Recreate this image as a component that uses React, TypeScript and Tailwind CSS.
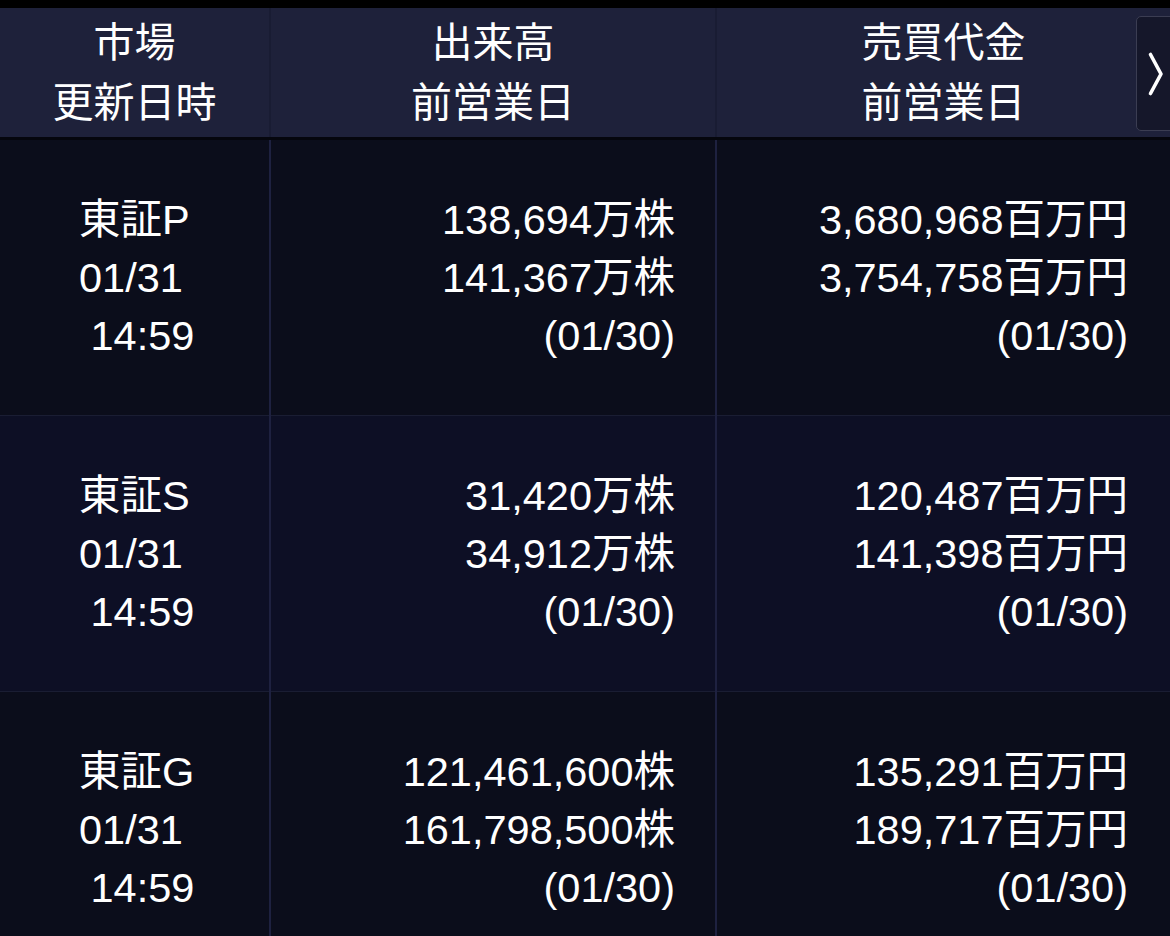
import { Fragment } from "react";

type Row = {
  market: string;
  date: string;
  time: string;
  volume: [string, string];
  value: [string, string];
  prev: string;
};

const rows: Row[] = [
  {
    market: "東証P",
    date: "01/31",
    time: " 14:59",
    volume: ["138,694万株", "141,367万株"],
    value: ["3,680,968百万円", "3,754,758百万円"],
    prev: "(01/30)"
  },
  {
    market: "東証S",
    date: "01/31",
    time: " 14:59",
    volume: ["31,420万株", "34,912万株"],
    value: ["120,487百万円", "141,398百万円"],
    prev: "(01/30)"
  },
  {
    market: "東証G",
    date: "01/31",
    time: " 14:59",
    volume: ["121,461,600株", "161,798,500株"],
    value: ["135,291百万円", "189,717百万円"],
    prev: "(01/30)"
  }
];

const font = { fontFamily: '"Liberation Sans", "Noto Sans CJK JP", sans-serif' };

export default function App() {
  return (
    <div
      className="flex h-[936px] w-[1170px] flex-col overflow-hidden bg-[#0b0d1b] text-[41.5px] leading-[58px] text-white"
      style={font}
    >
      <div className="h-2 shrink-0 bg-black" />

      <header className="grid h-[129px] shrink-0 grid-cols-[269px_2px_444px_2px_1fr] bg-[#1e213a] text-[41px] leading-[60px]">
        <div className="flex flex-col items-center justify-center">
          <span>市場</span>
          <span>更新日時</span>
        </div>
        <div className="bg-[#191c33]" />
        <div className="flex flex-col items-center justify-center">
          <span>出来高</span>
          <span>前営業日</span>
        </div>
        <div className="bg-[#191c33]" />
        <div className="relative flex flex-col items-center justify-center">
          <span>売買代金</span>
          <span>前営業日</span>
          <button
            type="button"
            className="absolute right-[-6px] top-2 flex h-[115px] w-10 items-center rounded-[5px] border border-[#3b3d52] bg-[#15172a] pl-[10px]"
            aria-label="next"
          >
            <svg width="18" height="46" viewBox="0 0 18 46" fill="none">
              <path
                d="M3.5 3.5 L14 23 L3.5 42.5"
                stroke="white"
                strokeWidth="3.6"
                strokeLinecap="round"
                strokeLinejoin="round"
              />
            </svg>
          </button>
        </div>
      </header>

      <div className="h-[3px] shrink-0 bg-[#05060d]" />

      <div className="grid shrink-0 grid-cols-[269px_2px_444px_2px_1fr] grid-rows-[275px_1px_275px_1px_275px]">
        {rows.map((r, i) => {
          const bg = i === 1 ? "bg-[#0d0f25]" : "bg-[#0b0d1b]";
          return (
            <Fragment key={r.market}>
              {i > 0 ? (
                <>
                  <div className="bg-[#1a1d33]" />
                  <div className="bg-[#1e2140]" />
                  <div className="bg-[#1a1d33]" />
                  <div className="bg-[#1e2140]" />
                  <div className="bg-[#1a1d33]" />
                </>
              ) : null}
              <div className={`flex flex-col justify-center whitespace-pre pl-[79px] ${bg}`}>
                <span>{r.market}</span>
                <span>{r.date}</span>
                <span>{r.time}</span>
              </div>
              <div className="bg-[#1e2140]" />
              <div className={`flex flex-col items-end justify-center pr-10 ${bg}`}>
                <span>{r.volume[0]}</span>
                <span>{r.volume[1]}</span>
                <span>{r.prev}</span>
              </div>
              <div className="bg-[#1e2140]" />
              <div className={`flex flex-col items-end justify-center pr-[42px] ${bg}`}>
                <span>{r.value[0]}</span>
                <span>{r.value[1]}</span>
                <span>{r.prev}</span>
              </div>
            </Fragment>
          );
        })}
      </div>
    </div>
  );
}
